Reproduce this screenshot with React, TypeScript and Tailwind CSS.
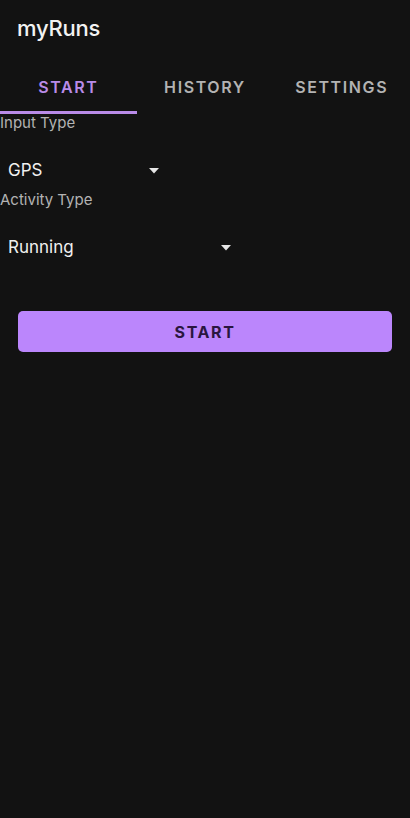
export default function App() {
  const tabs = ["START", "HISTORY", "SETTINGS"];
  return (
    <div className="min-h-[818px] w-[410px] bg-[#121212] text-white" style={{ fontFamily: "Inter, 'Liberation Sans', sans-serif" }}>
      {/* app bar */}
      <div className="h-[57px] flex items-center px-[17px]">
        <h1 className="text-[22px] font-medium tracking-[-0.01em] text-[#f2f2f2]">myRuns</h1>
      </div>

      {/* tabs */}
      <div className="grid grid-cols-3 h-[57px]">
        {tabs.map((t, i) => (
          <div key={t} className="relative flex items-center justify-center pt-[3px]">
            <span
              className={
                "text-[16px] font-semibold tracking-[0.1em] " +
                (i === 0 ? "text-[#b98be8]" : "text-[#b3b3b3]")
              }
            >
              {t}
            </span>
            {i === 0 && <div className="absolute bottom-0 left-0 right-0 h-[3px] bg-[#b98be8]" />}
          </div>
        ))}
      </div>

      <div className="flex flex-col">
        <span className="text-[15px] leading-[20px] text-[#b3b3b3] -mt-px">Input Type</span>
        <div className="h-[57px] flex items-start pl-2 w-[164px] justify-between pr-1 pt-[26px]">
          <span className="text-[17px] leading-[22px] text-[#f0f0f0]">GPS</span>
          <Caret />
        </div>
        <span className="text-[15px] leading-[20px] text-[#b3b3b3]">Activity Type</span>
        <div className="h-[58px] flex items-start pl-2 w-[236px] justify-between pr-1 pt-[26px]">
          <span className="text-[17px] leading-[22px] text-[#f0f0f0]">Running</span>
          <Caret />
        </div>
      </div>

      <div className="px-[18px] pt-[43px]">
        <button className="w-full h-[41px] rounded-[5px] bg-[#bb86fc] text-[#2a1640] text-[16px] font-bold tracking-[0.1em]">
          START
        </button>
      </div>
    </div>
  );
}

function Caret() {
  return (
    <svg width="12" height="6" viewBox="0 0 12 6" className="mt-[9px]">
      <path d="M1 0h10L6 5.5z" fill="#e6e6e6" />
    </svg>
  );
}
